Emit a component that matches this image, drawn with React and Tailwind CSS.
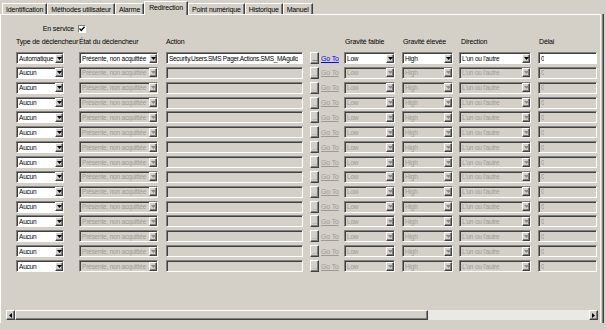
import React from 'react'

const TABS = ['Identification', 'Méthodes utilisateur', 'Alarme', 'Redirection', 'Point numérique', 'Historique', 'Manuel']
const HEADERS = [
  ['Type de déclencheur', 0],
  ['État du déclencheur', 1],
  ['Action', 2],
  ['', 3],
  ['', 4],
  ['Gravité faible', 5],
  ['Gravité élevée', 6],
  ['Direction', 7],
  ['Délai', 8],
]

const ROWS = Array.from({ length: 15 }, (_, i) => i === 0)

const sunken = 'border border-t-[#808080] border-l-[#808080] border-b-white border-r-white shadow-[inset_1px_1px_0_#404040]'
const raised = 'border border-t-white border-l-white border-b-[#404040] border-r-[#404040] shadow-[inset_-1px_-1px_0_#808080]'

function Arrow({ on }) {
  return (
    <svg width="5" height="3" viewBox="0 0 5 3">
      <path d="M0 0h5L2.5 3z" fill={on ? '#000' : '#8a8a8a'} />
    </svg>
  )
}

function Combo({ value, w, on }) {
  return (
    <div className={`flex items-center h-[12px] ${w} ${sunken} ${on ? 'bg-white text-black' : 'bg-[#d4d0c8] text-[#9c9a96]'}`}>
      <span className="flex-1 pl-[2px] text-[6.5px] tracking-[-0.2px] whitespace-nowrap overflow-hidden leading-[9px]">{value}</span>
      <div className={`flex items-center justify-center h-[9px] w-[8px] shrink-0 bg-[#d4d0c8] ${raised}`}>
        <Arrow on={on} />
      </div>
    </div>
  )
}

function Edit({ value, w, on, tight }) {
  return (
    <div className={`flex items-center h-[12px] ${w} ${sunken} ${on ? 'bg-white text-black' : 'bg-[#d4d0c8] text-[#9c9a96]'}`}>
      <span className={`pl-[2px] text-[6.5px] whitespace-nowrap overflow-hidden leading-[9px] ${tight ? 'tracking-[-0.3px]' : ''}`}>{value}</span>
    </div>
  )
}

function Row({ on }) {
  return (
    <div className="grid grid-cols-[63px_87px_144px_11px_23px_58px_57px_79px_59px] items-center h-[12px]">
      <Combo w="w-[48px]" value={on ? 'Automatique' : 'Aucun'} on />
      <Combo w="w-[79px]" value="Présente, non acquittée" on={on} />
      <Edit w="w-[137px]" value={on ? 'Security.Users.SMS Pager.Actions.SMS_MAgullo' : ''} on={on} tight />
      <div className={`flex items-end justify-center h-[12px] w-[9px] bg-[#d4d0c8] ${raised}`}>
        <span className={`text-[7px] leading-[8px] tracking-[-0.5px] ${on ? 'text-black' : 'text-[#9c9a96]'}`}>...</span>
      </div>
      <span className={`underline leading-none whitespace-nowrap ${on ? 'text-[#0000ff]' : 'text-[#9c9a96]'}`}>Go To</span>
      <Combo w="w-[51px]" value="Low" on={on} />
      <Combo w="w-[51px]" value="High" on={on} />
      <Combo w="w-[72px]" value="L'un ou l'autre" on={on} />
      <Edit w="w-[59px]" value="0" on={on} />
    </div>
  )
}

export default function App() {
  return (
    <div className="w-[606px] h-[330px] bg-[#d4d0c8] text-[7px] tracking-[-0.15px] text-black overflow-hidden" style={{ fontFamily: '"Liberation Sans", Arial, sans-serif' }}>
      {/* Tabs */}
      <div className="flex items-end h-[14px] pl-[2px]">
        {TABS.map(t => {
          const sel = t === 'Redirection'
          return (
            <div
              key={t}
              className={`flex items-center border-t border-l border-t-white border-l-white border-r border-r-[#404040] shadow-[inset_-1px_0_0_#808080] leading-none whitespace-nowrap
                ${sel ? 'h-[14px] -mb-[1px] relative z-10 bg-[#d4d0c8] pb-[3px] px-[4px]' : 'h-[11px] pt-[1px] px-[3px]'}`}
            >
              {t}
            </div>
          )
        })}
      </div>

      {/* Panel */}
      <div className="flex h-[309px]">
        <div className="flex flex-col w-[601px] border-t border-l border-r border-t-white border-l-white border-r-[#f4f3f0] pl-[15px] pr-[3px]">
          <div className="flex items-center h-[11px] mt-[8px]">
            <span className="w-[58px] text-right leading-none">En service</span>
            <div className="ml-[4px] w-[8px] h-[8px] bg-white border border-t-[#808080] border-l-[#808080] border-b-white border-r-white flex items-center justify-center">
              <svg width="6" height="6" viewBox="0 0 6 6">
                <path d="M0.5 2.5L2.3 4.5L5.5 0.8" stroke="#000" strokeWidth="1.3" fill="none" />
              </svg>
            </div>
          </div>

          <div className="grid grid-cols-[63px_87px_144px_11px_23px_58px_57px_79px_59px] h-[9px] mt-[3px] items-center">
            {HEADERS.map(([h, i]) => (
              <span key={i} className={`leading-none whitespace-nowrap ${i >= 5 ? 'pl-[1px]' : ''} ${i === 7 ? 'pl-[2px]' : ''}`}>{h}</span>
            ))}
          </div>

          <div className="flex flex-col gap-[2.86px] mt-[6px]">
            {ROWS.map((on, i) => <Row key={i} on={on} />)}
          </div>

          <div className="flex-1" />

          {/* Horizontal scrollbar */}
          <div className="flex h-[10px] ml-[-10px] mr-[-1px] mb-[3px]">
            <div className={`flex items-center justify-center w-[9px] h-[10px] bg-[#d4d0c8] ${raised}`}>
              <svg width="3" height="5" viewBox="0 0 3 5"><path d="M3 0v5L0 2.5z" fill="#000" /></svg>
            </div>
            <div className={`w-[413px] h-[10px] bg-[#d4d0c8] ${raised}`} />
            <div className="flex-1 h-[10px] bg-[#ebe9e5]" />
            <div className={`flex items-center justify-center w-[9px] h-[10px] bg-[#d4d0c8] ${raised}`}>
              <svg width="3" height="5" viewBox="0 0 3 5"><path d="M0 0v5L3 2.5z" fill="#000" /></svg>
            </div>
          </div>
        </div>
        <div className="w-[3px] border-r border-r-[#404040] shadow-[inset_-1px_0_0_#808080]" />
      </div>
    </div>
  )
}
